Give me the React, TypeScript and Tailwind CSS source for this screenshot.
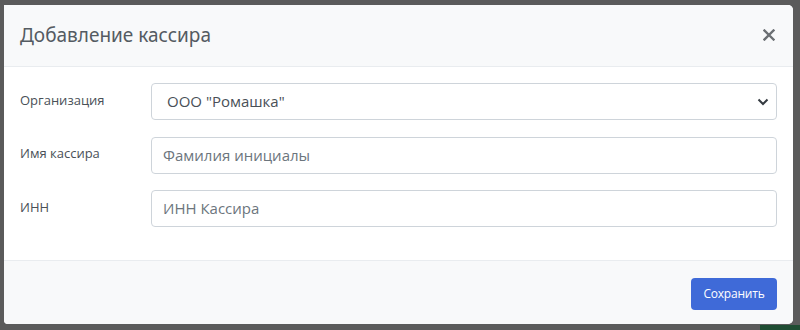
import React from "react";

const App = () => {
  return (
    <div className="relative w-[800px] h-[330px] overflow-hidden bg-[#5b5b5b] font-['Open_Sans',sans-serif]">
      {/* backdrop remnant */}
      <div className="absolute right-0 bottom-0 w-[40px] h-[5px] bg-[#1f4d33]" />

      {/* Modal */}
      <div className="absolute left-[4px] top-[5px] w-[789px] h-[319px] flex flex-col bg-white rounded-r-[5px] rounded-bl-[4px] overflow-hidden">
        {/* Header */}
        <div className="h-[62px] flex items-center justify-between pl-[16px] pr-[18px] bg-[#f8f9fa] border-b border-[#e9ecef]">
          <h5 className="text-[19px] text-[#545b62] font-normal leading-none font-['Noto_Sans',sans-serif]">
            Добавление кассира
          </h5>
          <button className="text-[#6b6f73] -mt-[2px]">
            <svg width="12" height="12" viewBox="0 0 12 12">
              <path d="M1.5 1.5L10.5 10.5M10.5 1.5L1.5 10.5" stroke="currentColor" strokeWidth="2.4" strokeLinecap="square" />
            </svg>
          </button>
        </div>

        {/* Body */}
        <div className="flex flex-col gap-[16.5px] pt-[16px] pb-[16px] px-[16px] h-[193px]">
          <div className="flex items-center">
            <label className="w-[131px] text-[13px] text-[#495057] -mt-[2px]">Организация</label>
            <div className="flex-1 h-[37px] flex items-center justify-between pl-[15px] pr-[7px] border border-[#ced4da] rounded-[4px]">
              <span className="text-[15px] text-[#495057]">ООО "Ромашка"</span>
              <svg width="12" height="8" viewBox="0 0 12 8">
                <path d="M1.5 1.5L6 6L10.5 1.5" fill="none" stroke="#343a40" strokeWidth="2" />
              </svg>
            </div>
          </div>
          <div className="flex items-center">
            <label className="w-[131px] text-[13px] text-[#495057] -mt-[2px]">Имя кассира</label>
            <div className="flex-1 h-[37px] flex items-center pl-[11px] border border-[#ced4da] rounded-[4px]">
              <span className="text-[15px] text-[#6c757d]">Фамилия инициалы</span>
            </div>
          </div>
          <div className="flex items-center">
            <label className="w-[131px] text-[13px] text-[#495057] -mt-[2px]">ИНН</label>
            <div className="flex-1 h-[37px] flex items-center pl-[11px] border border-[#ced4da] rounded-[4px]">
              <span className="text-[15px] text-[#6c757d]">ИНН Кассира</span>
            </div>
          </div>
        </div>

        {/* Footer */}
        <div className="flex-1 flex items-center justify-end pr-[16px] bg-[#f8f9fa] border-t border-[#e9ecef]">
          <button className="w-[86px] h-[32px] mt-[2px] rounded-[4px] bg-[#3f6ad8] text-white text-[12px] tracking-[-0.2px]">
            Сохранить
          </button>
        </div>
      </div>
    </div>
  );
};

export default App;
